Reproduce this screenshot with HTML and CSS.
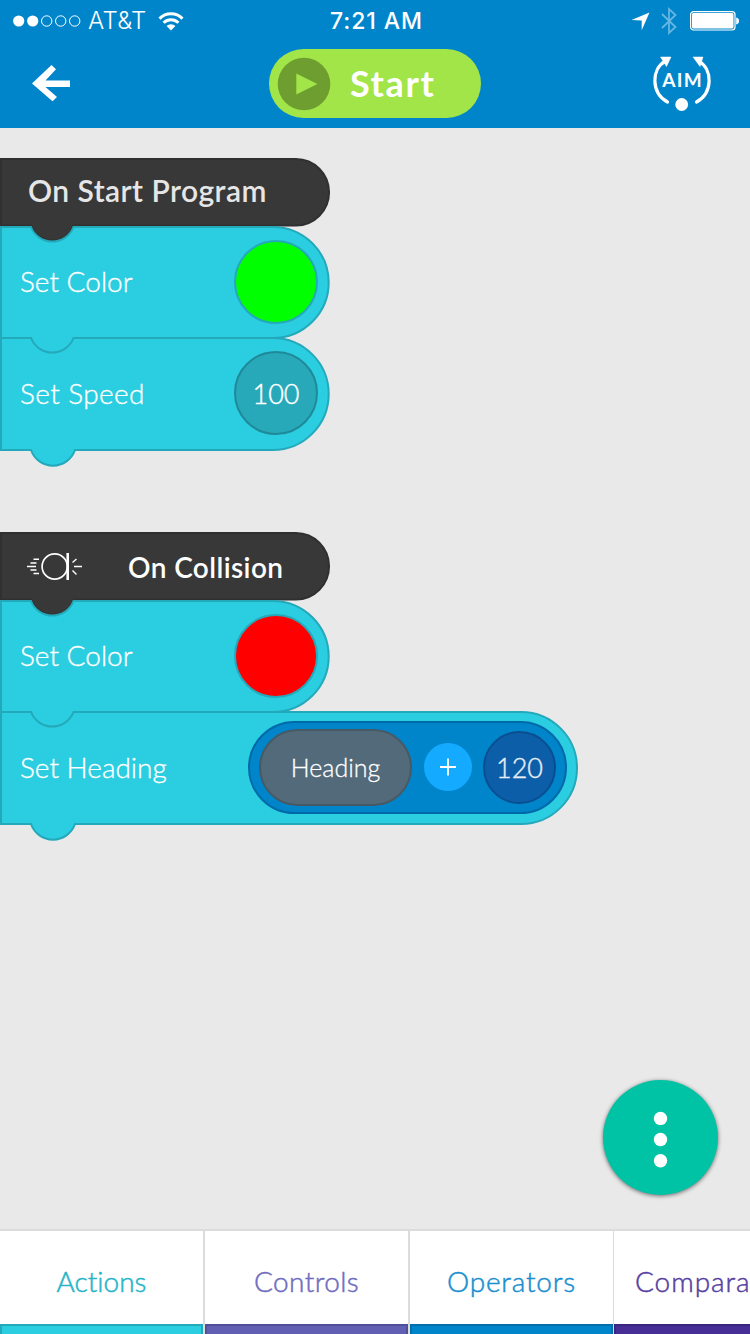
FILE: index.html
```html
<!DOCTYPE html>
<html lang="en">
<head>
<meta charset="utf-8">
<title>Program</title>
<link rel="stylesheet" href="styles.css">
</head>
<body>
<div class="app">
  <header class="header">
    <div class="status">
      <div class="status-left">
        <svg width="68" height="12" viewBox="0 0 68 12" fill="none" stroke="#fff"><circle cx="5.700" cy="6" r="5.600" fill="#fff" stroke="none"/><circle cx="19.700" cy="6" r="5.600" fill="#fff" stroke="none"/><circle cx="33.700" cy="6" r="5.200"/><circle cx="47.700" cy="6" r="5.200"/><circle cx="61.700" cy="6" r="5.200"/></svg>
        <span class="carrier">AT&amp;T</span>
        <svg class="wifi" width="26" height="19" viewBox="0 0 26 19" fill="none" stroke="#fff" stroke-width="3"><path d="M1.500 6.600A16.300 16.300 0 0 1 24.500 6.600"/><path d="M5.600 10.800A10.500 10.500 0 0 1 20.400 10.800"/><path d="M8.600 14.100A6.200 6.200 0 0 1 17.400 14.100L13 18.500Z" fill="#fff" stroke="none"/></svg>
      </div>
      <span class="time">7:21 AM</span>
      <div class="status-right">
        <svg width="19" height="19" viewBox="0 0 19 19"><path d="M18.500 0.500L10.700 18.300V8.500L0.500 8Z" fill="#fff"/></svg>
        <svg class="bluetooth" width="16" height="28" viewBox="0 0 16 28" fill="none" stroke="#66b6e0" stroke-width="1.800"><path d="M1 7L14.500 20L8 26V2L14.500 8L1 21"/></svg>
        <svg width="50" height="20" viewBox="0 0 50 20"><rect x="0.600" y="0.600" width="44.400" height="18.400" rx="3" fill="none" stroke="#fff" stroke-width="1.200"/><rect x="2" y="2" width="41.500" height="15.600" rx="1.500" fill="#fff"/><path d="M46.200 6.500C50 7 50 13 46.200 13.500Z" fill="#fff"/></svg>
      </div>
    </div>
    <nav class="nav">
      <svg class="back" width="39" height="37" viewBox="0 0 39 37"><path d="M19.500 0L24 4.200L13.500 15.500H38V22H13.500L25 32L20.500 36.200L0 18.500Z" fill="#fff"/></svg>
      <button class="start">
        <svg width="54" height="54" viewBox="0 0 54 54"><circle cx="27" cy="27" r="26.300" fill="#6f9e30"/><path d="M19.300 16.500V37.500L40.400 27Z" fill="#a1e549"/></svg>
        <span class="start-label">Start</span>
      </button>
      <svg class="aim" width="60" height="56" viewBox="0 0 60 56"><g fill="none" stroke="#fff" stroke-width="3.200"><path d="M14.500 46C-2 37 -2 13 12.500 5" stroke-linecap="round"/><path d="M43.500 46C60 37 60 13 45.500 5" stroke-linecap="round"/></g><path d="M7.500 1L18 1L13.500 10.500Z M50 1L40 1L47 10.500Z" fill="#fff" stroke="#fff" stroke-width=".5"/><circle cx="28.700" cy="48.500" r="6.400" fill="#fff"/><text class="aim-text" x="29.600" y="31" text-anchor="middle">AIM</text></svg>
    </nav>
  </header>

  <main class="canvas">
    <section class="stack">
      <div class="block event">
        <svg class="shape" width="332" height="84"><path class="event-shape" d="M1 1H296A33 33.200 0 0 1 296 67.500H74A22.800 22.800 0 0 1 31 67.500H1Z"/></svg>
        <span class="event-label first">On Start Program</span>
      </div>
      <div class="block action">
        <svg class="shape" width="332" height="132"><path class="action-shape" d="M1 1H31A22.800 22.800 0 0 0 73.500 1H272.700A56 55.500 0 0 1 272.700 112H75A23.300 23.300 0 0 1 31 112H1Z"/></svg>
        <span class="action-label color">Set Color</span>
        <span class="value green"></span>
      </div>
      <div class="block action">
        <svg class="shape" width="332" height="132"><path class="action-shape" d="M1 1H31A22.800 22.800 0 0 0 73.500 1H272.700A56 56 0 0 1 272.700 113H75A23.300 23.300 0 0 1 31 113H1Z"/></svg>
        <span class="action-label speed">Set Speed</span>
        <span class="value number">100</span>
      </div>
    </section>

    <section class="stack">
      <div class="block event">
        <svg class="shape" width="332" height="84"><path class="event-shape" d="M1 1H296A33 33.200 0 0 1 296 67.500H74A22.800 22.800 0 0 1 31 67.500H1Z"/></svg>
        <svg class="collision" width="56" height="30" viewBox="0 0 56 30" fill="none" stroke="#fff" stroke-width="1.400"><circle cx="27.700" cy="14.500" r="12.600" stroke-width="1.700"/><path d="M40.700 1V28" stroke-width="2.600"/><path d="M6.500 7.300H12M3.500 11H9.500M0 14.500H9M3.500 18H9.500M6.500 21.500H12M47 14.500H55M45.500 10.500L49.500 7M45.500 18.500L49.500 22.500"/></svg>
        <span class="event-label second">On Collision</span>
      </div>
      <div class="block action">
        <svg class="shape" width="332" height="132"><path class="action-shape" d="M1 1H31A22.800 22.800 0 0 0 73.500 1H272.700A56 55.500 0 0 1 272.700 112H75A23.300 23.300 0 0 1 31 112H1Z"/></svg>
        <span class="action-label color">Set Color</span>
        <span class="value red"></span>
      </div>
      <div class="block action wide">
        <svg class="shape" width="580" height="132"><path class="action-shape" d="M1 1H31A22.800 22.800 0 0 0 73.500 1H521A56 56 0 0 1 521 113H75A23.300 23.300 0 0 1 31 113H1Z"/></svg>
        <span class="action-label heading">Set Heading</span>
        <span class="expression">
          <span class="variable">Heading</span>
          <span class="plus"><svg width="16" height="18" viewBox="0 0 16 18" stroke="#fff" stroke-width="1.800"><path d="M0 9H16M8 0.500V17.500"/></svg></span>
          <span class="operand">120</span>
        </span>
      </div>
    </section>

    <button class="fab"><svg width="14" height="56" viewBox="0 0 14 56" fill="#fff"><circle cx="6.500" cy="6.400" r="6.700"/><circle cx="6.500" cy="27.500" r="6.700"/><circle cx="6.500" cy="48.700" r="6.700"/></svg></button>
  </main>

  <footer class="tabs">
    <div class="tab actions"><span class="tab-label">Actions</span></div>
    <div class="tab controls"><span class="tab-label">Controls</span></div>
    <div class="tab operators"><span class="tab-label">Operators</span></div>
    <div class="tab comparators"><span class="tab-label">Compara</span></div>
  </footer>
</div>
</body>
</html>
```
FILE: styles.css
```css
* { box-sizing: border-box; }
body { margin: 0; font-family: Lato, "Open Sans", sans-serif; font-variant-ligatures: none; }
svg { display: block; flex: none; overflow: visible; }
button { border: 0; padding: 0; font: inherit; color: inherit; }
.app { width: 750px; height: 1334px; display: flex; flex-direction: column; background: #e9e9e9; overflow: hidden; }

.header { height: 128px; flex: none; background: #0085cb; color: #fff; }
.status { height: 40px; display: grid; grid-template-columns: 1fr auto 1fr; align-items: center; padding: 1px 10px 0 13px; font-family: Inter, sans-serif; }
.status-left { display: flex; align-items: center; }
.carrier { margin-left: 7px; font-size: 24px; font-weight: 300; letter-spacing: 0.3px; line-height: 40px; }
.wifi { margin-left: 11px; }
.time { font-size: 23px; font-weight: 500; line-height: 39px; letter-spacing: 0.9px; padding-top: 1px; }
.status-right { display: flex; align-items: center; justify-content: flex-end; }
.bluetooth { margin: 0 13px 0 11px; }
.nav { height: 88px; display: flex; align-items: flex-start; padding-left: 32px; }
.back { margin-top: 25px; }
.start { display: flex; align-items: center; width: 212px; height: 69px; margin: 9px 0 0 198px; padding-left: 8px; border-radius: 35px; background: #a1e549; }
.start-label { margin-left: 19px; font-size: 36px; font-weight: 700; line-height: 66px; padding-bottom: 2px; letter-spacing: 1.6px; }
.aim { margin: 16px 0 0 172px; }
.aim-text { font-size: 19px; font-weight: 700; fill: #fff; letter-spacing: 1.3px; }

.canvas { position: relative; height: 1101px; flex: none; display: flex; flex-direction: column; gap: 84px; padding-top: 30px; }
.stack { display: flex; flex-direction: column; }
.block { position: relative; display: flex; align-items: center; white-space: nowrap; }
.shape { position: absolute; left: 0; top: 0; }
.block > :not(.shape) { position: relative; }
.event { width: 330px; height: 68px; }
.event-shape { fill: #383838; stroke: #303030; stroke-width: 2; }
.event-label { font-size: 30px; font-weight: 600; color: #e6e6e6; line-height: 66px; }
.first { margin-left: 28px; padding-bottom: 4px; letter-spacing: 0.45px; }
.second { margin-left: 45px; padding-top: 2px; color: #fff; font-size: 28px; letter-spacing: 0.4px; }
.collision { margin: 2px 0 0 27px; }
.action { width: 330px; height: 111px; justify-content: space-between; padding: 0 12px 0 20px; }
.wide { width: 578px; height: 114px; padding-right: 11px; }
.action-shape { fill: #2bcde1; stroke: #24a9bb; stroke-width: 2; }
.action-label { font-size: 28px; font-weight: 300; color: #fff; -webkit-text-stroke: 0.35px #fff; padding-bottom: 2px; }
.speed { letter-spacing: 0.4px; padding-bottom: 0; }
.value { width: 84px; height: 84px; border-radius: 50%; border: 2px solid #24a9bb; display: flex; align-items: center; justify-content: center; color: #fff; }
.green { background: #0f0; }
.red { background: #f00; }
.number { margin-top: 1px; background: #27a9ba; border-color: #1f8997; font-size: 27px; font-weight: 300; -webkit-text-stroke: 0.4px #fff; }
.expression { display: flex; align-items: center; width: 319px; height: 93px; padding: 0 9px; border: 2px solid #006aa8; border-radius: 47px; background: #0085cb; margin-top: -1px; }
.variable { width: 153px; height: 77px; border: 2px solid #465a66; border-radius: 39px; background: #526a79; display: flex; align-items: center; justify-content: center; color: #fff; font-size: 25px; font-weight: 300; -webkit-text-stroke: 0.3px #fff; padding-bottom: 2px; }
.plus { width: 48px; height: 48px; border-radius: 50%; background: #14aaff; margin: 0 11px 1px 12px; display: flex; align-items: center; justify-content: center; }
.operand { width: 73px; height: 73px; border: 2px solid #094f90; border-radius: 50%; background: #0d5ea9; display: flex; align-items: center; justify-content: center; color: #e4edf6; font-size: 27px; font-weight: 300; -webkit-text-stroke: 0.4px #e4edf6; }

.fab { position: absolute; left: 603px; top: 952px; width: 115px; height: 115px; border-radius: 50%; background: #00c3a6; box-shadow: 0 1px 4px rgba(0, 0, 0, .55); display: flex; align-items: center; justify-content: center; padding-top: 4px; }

.tabs { height: 105px; flex: none; display: grid; grid-template-columns: 205px 205px 204px 136px; border-top: 2px solid #dcdcdc; background: #fff; }
.tab { display: flex; flex-direction: column; border-right: 2px solid #dcdcdc; text-align: center; }
.operators { border-right-width: 1px; }
.tab::after { content: ""; height: 10px; border: 2px solid var(--edge); border-bottom: 0; background: var(--fill); }
.tab-label { height: 93px; line-height: 101px; font-size: 28px; font-weight: 300; -webkit-text-stroke: 0.5px currentColor; }
.controls .tab-label { letter-spacing: 0.4px; }
.operators .tab-label { letter-spacing: 0.8px; }
.actions { --fill: #2bcde1; --edge: #24a9bb; color: #27b4c6; }
.controls { --fill: #605fb3; --edge: #504f98; color: #6f6dc0; }
.operators { --fill: #0085cb; --edge: #006fab; color: #178fd0; }
.comparators { --fill: #472e96; --edge: #3a267c; color: #563f9f; border-right: 0; }
.comparators::after { border-right: 0; }
.comparators .tab-label { text-align: left; padding-left: 21px; letter-spacing: 0.95px; }
```
